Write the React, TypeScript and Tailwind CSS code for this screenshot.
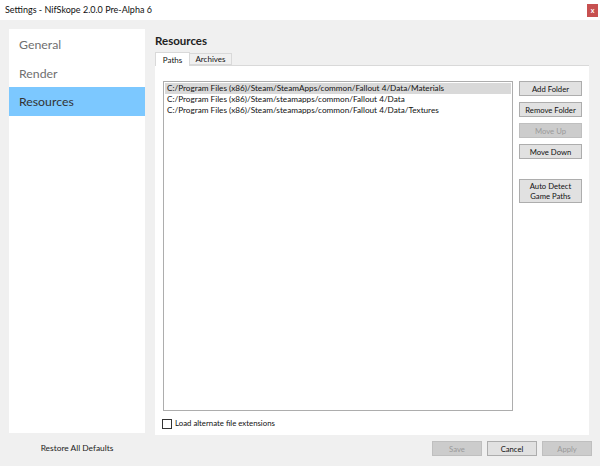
import React from "react";

const paths = [
  "C:/Program Files (x86)/Steam/SteamApps/common/Fallout 4/Data/Materials",
  "C:/Program Files (x86)/Steam/steamapps/common/Fallout 4/Data",
  "C:/Program Files (x86)/Steam/steamapps/common/Fallout 4/Data/Textures",
];

function Btn({ children, disabled, className = "" }: { children: React.ReactNode; disabled?: boolean; className?: string }) {
  return (
    <div
      className={
        "flex items-center justify-center text-center leading-[10px] text-[7.7px] whitespace-nowrap border " +
        (disabled
          ? "bg-[#cccccc] border-[#bfbfbf] text-[#9a9a9a] "
          : "bg-[#e1e1e1] border-[#adadad] text-[#111] ") +
        className
      }
    >
      {children}
    </div>
  );
}

export default function App() {
  return (
    <div
      className="w-[600px] h-[466px] bg-[#f0f0f0] flex flex-col overflow-hidden text-[#111]"
      style={{ fontFamily: 'Lato, "Noto Sans", sans-serif' }}
    >
      {/* Title bar */}
      <div className="h-[20px] bg-white flex items-center justify-between pl-[5px] pr-[2px]">
        <span className="text-[9px] text-[#111]">Settings - NifSkope 2.0.0 Pre-Alpha 6</span>
        <div className="w-[11px] h-[13px] bg-[#c75050] flex items-center justify-center text-white text-[7px] leading-none font-bold">
          x
        </div>
      </div>

      {/* Main */}
      <div className="flex pt-[9px] pl-[9px] h-[415px]">
        <div className="w-[136px] h-[404px] bg-white flex flex-col">
          <div className="h-[29px] flex items-center pl-[10px] pt-[3px] text-[12.3px] text-[#6f6f6f]">General</div>
          <div className="h-[29px] flex items-center pl-[10px] pt-[3px] text-[12.3px] text-[#6f6f6f]">Render</div>
          <div className="h-[29px] flex items-center pl-[10px] pt-[2px] text-[12.3px] text-[#333] bg-[#7cc8ff]">Resources</div>
        </div>

        <div className="ml-[10px] w-[434px] flex flex-col">
          <div className="h-[23px] flex items-center text-[11.5px] font-bold text-[#222] leading-none">Resources</div>
          <div className="flex items-end h-[13px]">
            <div className="w-[35px] h-[14px] -mb-[1px] bg-white border border-b-0 border-[#d9d9d9] flex items-center justify-center text-[8px] relative z-10">
              Paths
            </div>
            <div className="w-[42px] h-[12px] bg-[#f0f0f0] border border-l-0 border-[#d9d9d9] flex items-center justify-center text-[8px]">
              Archives
            </div>
          </div>
          <div className="h-[370px] bg-white border-t border-[#d9d9d9] flex flex-col pl-[8px] pt-[15px]">
            <div className="flex">
              <div className="w-[350px] h-[330px] border border-[#adadad] bg-white pt-[1px] pl-[1px] pr-[1px]">
                {paths.map((p, i) => (
                  <div
                    key={p}
                    className={
                      "h-[11px] flex items-center pl-[2px] text-[8.2px] leading-none whitespace-nowrap " +
                      (i === 0 ? "bg-[#d9d9d9]" : "")
                    }
                  >
                    {p}
                  </div>
                ))}
              </div>
              <div className="ml-[6px] w-[63px] flex flex-col">
                <Btn className="h-[15px]">Add Folder</Btn>
                <Btn className="h-[15px] mt-[6px]">Remove Folder</Btn>
                <Btn className="h-[15px] mt-[6px]" disabled>Move Up</Btn>
                <Btn className="h-[15px] mt-[6px]">Move Down</Btn>
                <Btn className="h-[24px] mt-[20px]">
                  Auto Detect
                  <br />
                  Game Paths
                </Btn>
              </div>
            </div>
            <div className="flex items-center mt-[7px] text-[7.8px]">
              <div className="w-[10px] h-[10px] border border-[#333] bg-white mr-[3px] -ml-[1px]" />
              <span>Load alternate file extensions</span>
            </div>
          </div>
        </div>
      </div>

      {/* Bottom */}
      <div className="flex items-start">
        <div className="ml-[9px] w-[136px] pt-[7px] text-center text-[8.4px] text-[#222]">Restore All Defaults</div>
        <div className="ml-auto mr-[8px] mt-[6px] flex">
          <Btn className="w-[50px] h-[15px]" disabled>Save</Btn>
          <Btn className="w-[50px] h-[15px] ml-[5px]">Cancel</Btn>
          <Btn className="w-[50px] h-[15px] ml-[5px]" disabled>Apply</Btn>
        </div>
      </div>
    </div>
  );
}
